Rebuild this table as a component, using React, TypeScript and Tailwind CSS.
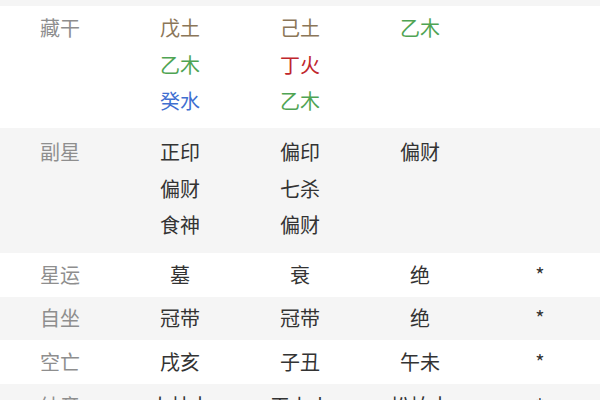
import React from "react";

type Item = { t: string; c?: string };

const BROWN = "text-[#8b7658]";
const GREEN = "text-[#4fa453]";
const BLUE = "text-[#3f6fd1]";
const RED = "text-[#c0262c]";

function Cell({ items }: { items: Item[] }) {
  return (
    <div className="flex flex-col items-center">
      {items.map((it, i) => (
        <span key={i} className={it.c ?? "text-[#333333]"}>
          {it.t}
        </span>
      ))}
    </div>
  );
}

function Row({
  label,
  cols,
  bg,
  cls,
}: {
  label: string;
  cols: Item[][];
  bg: string;
  cls: string;
}) {
  return (
    <div className={`grid grid-cols-5 ${bg} ${cls}`}>
      <div className="flex flex-col items-center text-[#8e8e8e]">
        <span>{label}</span>
      </div>
      {cols.map((c, i) => (
        <Cell key={i} items={c} />
      ))}
    </div>
  );
}

export default function App() {
  return (
    <div
      className="w-[600px] h-[400px] overflow-hidden bg-white text-[20px] leading-[36.5px]"
      style={{ fontFamily: '"Noto Sans CJK SC", "Noto Sans", sans-serif' }}
    >
      <div className="h-[6px] bg-[#f5f5f5]" />
      <Row
        label="藏干"
        bg="bg-white"
        cls="h-[122px] pt-[4px]"
        cols={[
          [
            { t: "戊土", c: BROWN },
            { t: "乙木", c: GREEN },
            { t: "癸水", c: BLUE },
          ],
          [
            { t: "己土", c: BROWN },
            { t: "丁火", c: RED },
            { t: "乙木", c: GREEN },
          ],
          [{ t: "乙木", c: GREEN }],
          [],
        ]}
      />
      <Row
        label="副星"
        bg="bg-[#f5f5f5]"
        cls="h-[125px] pt-[6px]"
        cols={[
          [{ t: "正印" }, { t: "偏财" }, { t: "食神" }],
          [{ t: "偏印" }, { t: "七杀" }, { t: "偏财" }],
          [{ t: "偏财" }],
          [],
        ]}
      />
      <Row
        label="星运"
        bg="bg-white"
        cls="h-[44px] items-center"
        cols={[[{ t: "墓" }], [{ t: "衰" }], [{ t: "绝" }], [{ t: "*" }]]}
      />
      <Row
        label="自坐"
        bg="bg-[#f5f5f5]"
        cls="h-[43px] items-center"
        cols={[[{ t: "冠带" }], [{ t: "冠带" }], [{ t: "绝" }], [{ t: "*" }]]}
      />
      <Row
        label="空亡"
        bg="bg-white"
        cls="h-[44px] items-center"
        cols={[[{ t: "戌亥" }], [{ t: "子丑" }], [{ t: "午未" }], [{ t: "*" }]]}
      />
      <Row
        label="纳音"
        bg="bg-[#f5f5f5]"
        cls="h-[44px] items-center"
        cols={[[{ t: "大林木" }], [{ t: "天上火" }], [{ t: "松柏木" }], [{ t: "*" }]]}
      />
    </div>
  );
}
